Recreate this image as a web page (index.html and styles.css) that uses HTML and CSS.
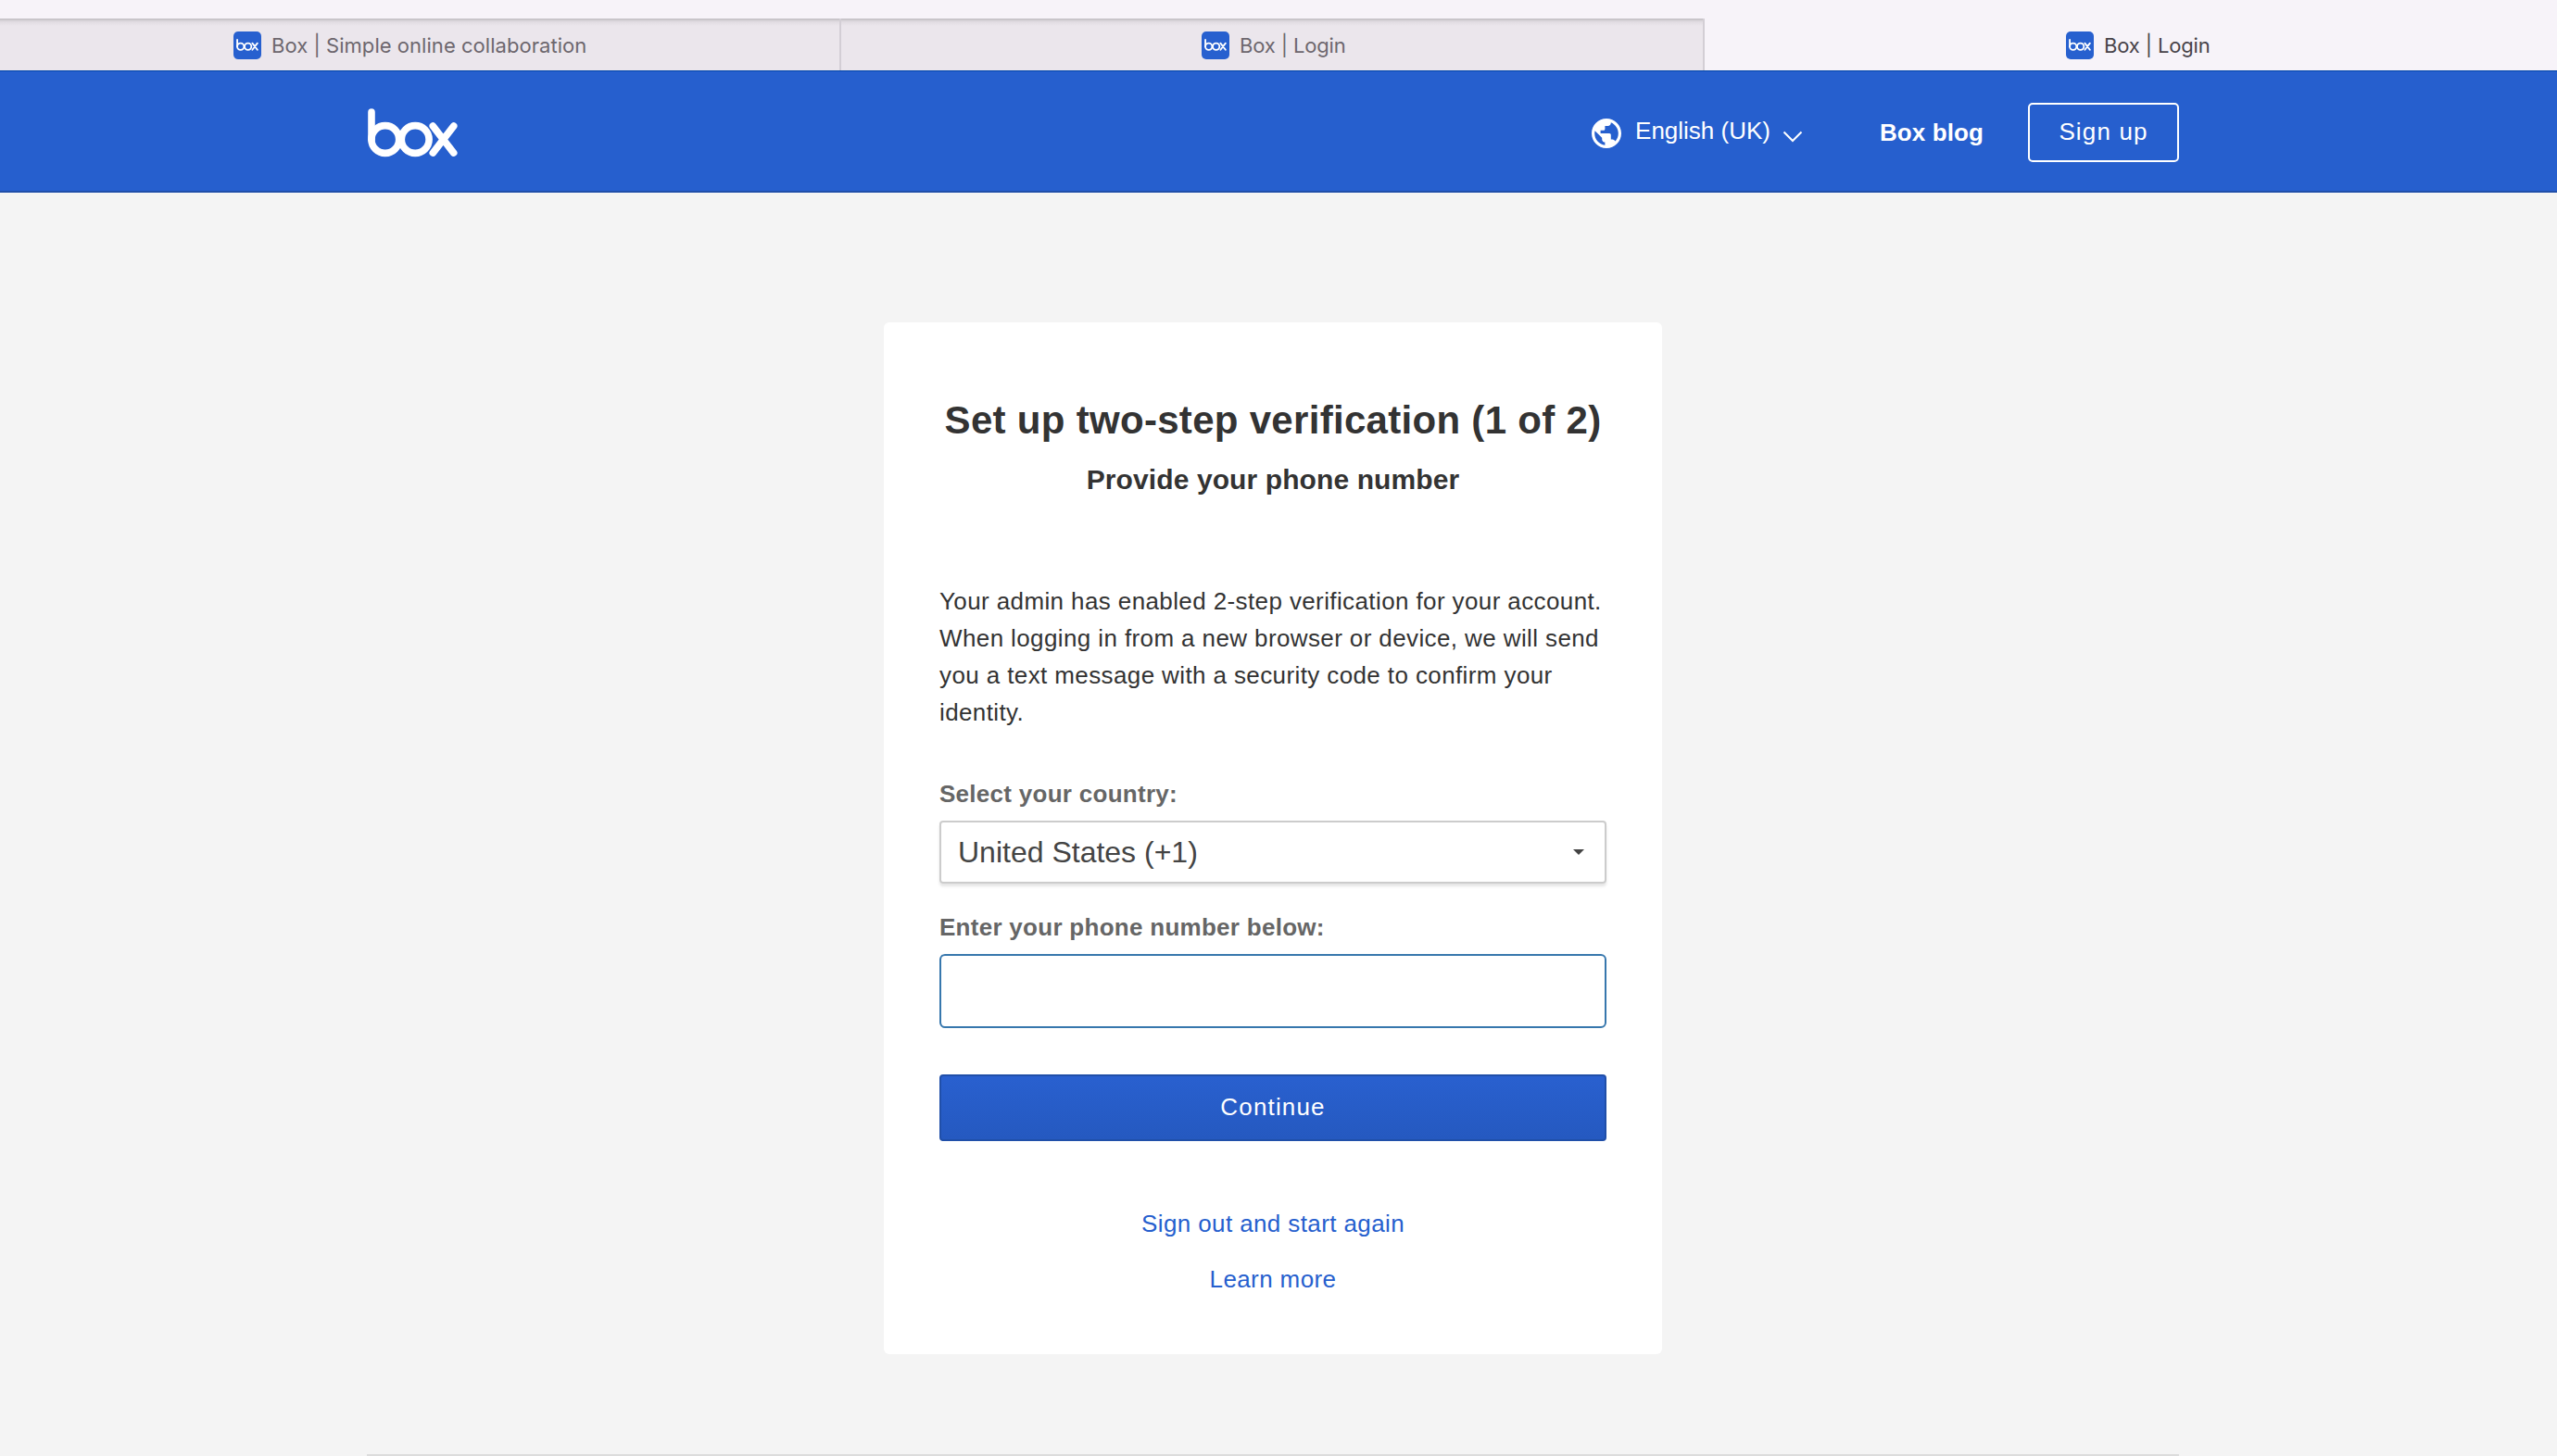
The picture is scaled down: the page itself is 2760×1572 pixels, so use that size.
FILE: index.html
```html
<!DOCTYPE html>
<html lang="en-GB">
<head>
<meta charset="utf-8">
<title>Box | Login</title>
<link rel="stylesheet" href="styles.css">
</head>
<body>
<svg class="defs" aria-hidden="true">
  <symbol id="box-logo" viewBox="0 0 97 53">
    <g class="logo-strokes" fill="none" stroke="currentColor" stroke-linecap="round">
      <path d="M70.3 19.1 92.7 48.1M92.7 19.1 70.3 48.1"/>
      <circle class="logo-gap" cx="51.2" cy="33.5" r="14.9"/>
      <circle cx="51.2" cy="33.5" r="14.9"/>
      <circle cx="18.8" cy="33.5" r="14.9"/>
      <path d="M4 4V33.5"/>
    </g>
  </symbol>
</svg>
<nav class="tabs">
  <div class="tab tab-first"><span class="favicon"><svg><use href="#box-logo"/></svg></span><span>Box | Simple online collaboration</span></div>
  <div class="tab tab-second"><span class="favicon"><svg><use href="#box-logo"/></svg></span><span>Box | Login</span></div>
  <div class="tab tab-active"><span class="favicon"><svg><use href="#box-logo"/></svg></span><span>Box | Login</span></div>
</nav>
<header class="header">
  <svg class="logo"><use href="#box-logo"/></svg>
  <div class="language">
    <svg class="globe" viewBox="2 2 20 20"><path fill="currentColor" d="M12 2C6.48 2 2 6.48 2 12s4.48 10 10 10 10-4.48 10-10S17.52 2 12 2zm-1 17.93c-3.95-.49-7-3.85-7-7.93 0-.62.08-1.21.21-1.79L9 15v1c0 1.1.9 2 2 2v1.93zm6.9-2.54c-.26-.81-1-1.39-1.900-1.390h-1v-3c0-.55-.45-1-1-1H8v-2h2c.55 0 1-.45 1-1V7h2c1.100 0 2-.9 2-2v-.41c2.930 1.190 5 4.060 5 7.410 0 2.080-.8 3.970-2.100 5.390z"/></svg>
    <span class="language-name">English (UK)</span>
    <svg class="chevron" viewBox="0 0 22 13"><path d="M1.500 1.500 11 11 20.500 1.500" fill="none" stroke="currentColor" stroke-width="2"/></svg>
  </div>
  <a class="blog">Box blog</a>
  <a class="signup">Sign up</a>
</header>
<main class="card">
  <h1>Set up two-step verification (1 of 2)</h1>
  <h2>Provide your phone number</h2>
  <p class="intro">Your admin has enabled 2-step verification for your account.<br>When logging in from a new browser or device, we will send<br>you a text message with a security code to confirm your<br>identity.</p>
  <div class="label">Select your country:</div>
  <div class="select"><span>United States (+1)</span><i class="caret"></i></div>
  <div class="label label-phone">Enter your phone number below:</div>
  <div class="input"></div>
  <div class="button">Continue</div>
  <a class="link">Sign out and start again</a>
  <a class="link link-more">Learn more</a>
</main>
<footer class="footer"></footer>
</body>
</html>
```
FILE: styles.css
```css
* { box-sizing: border-box; }
body {
  margin: 0;
  height: 1572px;
  overflow: hidden;
  display: flex;
  flex-direction: column;
  background: #f4f4f4;
  color: #333;
  font: 26px/40px "Liberation Sans", Arial, sans-serif;
  letter-spacing: .39px;
}
.defs { display: none; }

.tabs {
  height: 76px;
  flex: none;
  padding-top: 20px;
  display: flex;
  background: #f7f3f9;
  font: 22px/30px Inter, sans-serif;
  letter-spacing: -.15px;
}
.tab {
  display: flex;
  align-items: center;
  gap: 11px;
  padding-top: 1px;
  color: #6d676e;
  background: linear-gradient(#c5c1c6 0 1px, #d5d1d6 2px, #e2dde3 4px, #ebe6ec 8px);
  border-right: 2px solid #d3ced5;
  white-space: nowrap;
}
.tab-first { width: 908px; padding-left: 252px; letter-spacing: .04px; }
.tab-second { width: 932px; padding-left: 389px; }
.tab-active { flex: 1; padding-left: 390px; background: none; border: 0; color: #48434a; }
.favicon {
  width: 30px;
  height: 30px;
  border-radius: 5px;
  display: grid;
  place-items: center;
  background: #2760cf;
  color: #fff;
}
.favicon svg { width: 24px; height: 13px; }
.logo-strokes { stroke-width: 7.6px; }
.logo-gap { stroke: #265fce; stroke-width: 10px; }

.header {
  height: 132px;
  flex: none;
  padding: 0 408px 0 397px;
  display: flex;
  align-items: flex-start;
  color: #fff;
  background: #265fce;
  border-top: 1px solid #0043a8;
  border-bottom: 2px solid #204fa9;
}
.logo { width: 97px; height: 53px; margin-top: 40px; }
.language { display: flex; margin-left: auto; letter-spacing: 0; }
.globe { width: 32px; height: 32px; margin-top: 51px; }
.language-name { margin: 44px 0 0 15px; }
.chevron { width: 22px; height: 13px; margin: 64px 0 0 13px; }
.blog { margin: 46px 0 0 83px; font-weight: bold; letter-spacing: .1px; }
.signup {
  width: 163px;
  height: 64px;
  margin: 34px 0 0 48px;
  border: 2px solid #fff;
  border-radius: 5px;
  text-align: center;
  line-height: 59px;
  letter-spacing: 1.15px;
}

.card {
  width: 840px;
  height: 1114px;
  flex: none;
  margin: 140px 0 0 954px;
  padding: 79px 60px 0;
  background: #fff;
  border-radius: 6px;
  display: flex;
  flex-direction: column;
}
h1, h2 { margin: 0; text-align: center; white-space: nowrap; }
h1 { font-size: 42px; line-height: 54px; letter-spacing: .3px; }
h2 { font-size: 30px; line-height: 40px; margin-top: 17px; letter-spacing: .1px; }
.intro { margin: 91px 0 0; white-space: nowrap; }
.label { margin-top: 48px; font-weight: bold; color: #666; letter-spacing: .28px; }
.select {
  height: 68px;
  margin-top: 9px;
  padding: 0 22px 0 18px;
  display: flex;
  align-items: center;
  justify-content: space-between;
  border: 2px solid #ccc;
  border-radius: 4px;
  box-shadow: 0 3px 3px rgba(0,0,0,.1);
  font-size: 32px;
  letter-spacing: 0;
  color: #444;
}
.caret { border: 6px solid transparent; border-top-color: #444; border-bottom: 0; }
.label-phone { margin-top: 27px; }
.input { height: 80px; margin-top: 9px; border: 2px solid #3777ad; border-radius: 6px; }
.button {
  height: 72px;
  margin-top: 50px;
  border: 2px solid #204fa9;
  border-radius: 4px;
  background: linear-gradient(#2960cf, #2559c0);
  color: #fff;
  text-align: center;
  line-height: 67px;
  letter-spacing: 1.15px;
}
.link { margin-top: 69px; text-align: center; color: #265fce; }
.link-more { margin-top: 20px; }

.footer { width: 1956px; height: 2px; flex: none; margin: 108px 0 0 396px; background: #dcdcdc; }
```
